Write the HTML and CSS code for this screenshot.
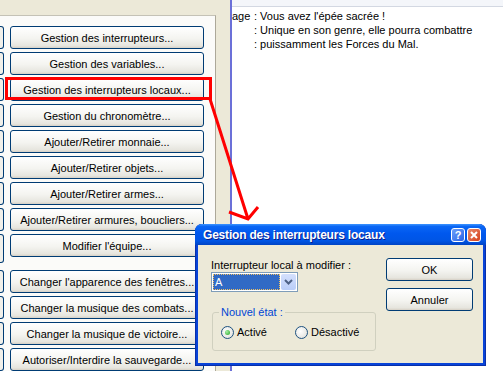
FILE: index.html
```html
<!DOCTYPE html>
<html lang="fr">
<head>
    <meta charset="UTF-8">
    <title>Gestion des interrupteurs locaux</title>
    <link rel="stylesheet" href="styles.css">
</head>
<body>

<div class="screen">
    <!-- Event command list -->
    <div class="editor">
        <div class="panel">
            <div class="row"><span class="stub"></span><button class="xp-btn">Gestion des interrupteurs...</button></div>
            <div class="row"><span class="stub"></span><button class="xp-btn">Gestion des variables...</button></div>
            <div class="row"><span class="stub"></span><button class="xp-btn">Gestion des interrupteurs locaux...</button></div>
            <div class="row"><span class="stub"></span><button class="xp-btn">Gestion du chronomètre...</button></div>
            <div class="row"><span class="stub"></span><button class="xp-btn">Ajouter/Retirer monnaie...</button></div>
            <div class="row"><span class="stub"></span><button class="xp-btn">Ajouter/Retirer objets...</button></div>
            <div class="row"><span class="stub"></span><button class="xp-btn">Ajouter/Retirer armes...</button></div>
            <div class="row"><span class="stub"></span><button class="xp-btn">Ajouter/Retirer armures, boucliers...</button></div>
            <div class="row"><span class="stub tall"></span><button class="xp-btn">Modifier l'équipe...</button></div>
            <div class="row spaced"><span class="stub"></span><button class="xp-btn">Changer l'apparence des fenêtres...</button></div>
            <div class="row"><span class="stub"></span><button class="xp-btn">Changer la musique des combats...</button></div>
            <div class="row"><span class="stub"></span><button class="xp-btn">Changer la musique de victoire...</button></div>
            <div class="row"><span class="stub"></span><button class="xp-btn">Autoriser/Interdire la sauvegarde...</button></div>
        </div>
    </div>

    <div class="divider"></div>

    <!-- Event contents -->
    <div class="log">
        <div class="log-head"></div>
        <div class="log-text">
            <div class="line"><span class="tag">age</span>: Vous avez l'épée sacrée !</div>
            <div class="line"><span class="tag"></span>: Unique en son genre, elle pourra combattre</div>
            <div class="line"><span class="tag"></span>: puissamment les Forces du Mal.</div>
        </div>
    </div>
</div>

<!-- Red annotation -->
<svg class="markup" width="503" height="371" viewBox="0 0 503 371">
    <rect x="6.5" y="78.5" width="204" height="20" fill="none" stroke="#ff0000" stroke-width="3"/>
    <path d="M210 99 L248 219 M229 212 L248 219 L258 207" fill="none" stroke="#ff0000" stroke-width="3"/>
</svg>

<!-- Dialog -->
<div class="dialog">
    <div class="titlebar">
        <span class="title">Gestion des interrupteurs locaux</span>
        <span class="cap-btn help">?</span>
        <span class="cap-btn close">
            <svg width="8" height="8" viewBox="0 0 8 8"><path d="M1 1 L7 7 M7 1 L1 7" stroke="#fff" stroke-width="2"/></svg>
        </span>
    </div>
    <div class="dlg-body">
        <div class="dlg-main">
            <div class="label">Interrupteur local à modifier :</div>
            <div class="combo">
                <span class="combo-value">A</span>
                <span class="combo-arrow">
                    <svg width="9" height="6" viewBox="0 0 9 6"><path d="M1 1 L4.5 4.5 L8 1" fill="none" stroke="#4d6185" stroke-width="2"/></svg>
                </span>
            </div>
            <fieldset class="group">
                <legend>Nouvel état :</legend>
                <div class="radios">
                    <label class="radio first"><span class="dot checked"></span>Activé</label>
                    <label class="radio"><span class="dot"></span>Désactivé</label>
                </div>
            </fieldset>
        </div>
        <div class="dlg-side">
            <button class="xp-btn">OK</button>
            <button class="xp-btn">Annuler</button>
        </div>
    </div>
</div>

</body>
</html>
```

FILE: styles.css
```css
body {
    margin: 0;
    width: 503px;
    height: 371px;
    overflow: hidden;
    position: relative;
    font-family: "Liberation Sans", Arial, sans-serif;
    font-size: 11px;
    color: #000;
}
.screen {
    display: flex;
    height: 371px;
}
.editor {
    width: 230px;
    background-color: #ece9d8;
    padding-top: 15px;
    box-sizing: border-box;
}
.panel {
    width: 216px;
    height: 100%;
    box-sizing: border-box;
    background-color: #fbfbf9;
    border-top: 1px solid #c4c2b6;
    border-right: 1px solid #aca899;
    padding-top: 10px;
}
.row {
    display: flex;
    height: 23px;
    margin-bottom: 3px;
}
.row.spaced {
    margin-top: 13px;
}
.stub {
    width: 3px;
    height: 21px;
    border: 1px solid #003c74;
    border-left: none;
    border-radius: 0 3px 3px 0;
    background-color: #f1f0ea;
}
.stub.tall {
    height: 27px;
}
.xp-btn {
    margin-left: 6px;
    width: 194px;
    height: 23px;
    padding: 0;
    border: 1px solid #003c74;
    border-radius: 3px;
    background: linear-gradient(#ffffff, #f4f4f0 55%, #e6e5de 90%, #d6d0c5);
    font-family: "Liberation Sans", Arial, sans-serif;
    font-size: 11px;
    color: #000;
}
.divider {
    width: 2px;
    background-color: #6b70d8;
}
.log {
    flex: 1;
    background-color: #fff;
}
.log-head {
    height: 6px;
    background-color: #f4f6fa;
    border-bottom: 1px solid #d3d8e2;
}
.log-text {
    padding-top: 2px;
    line-height: 14px;
}
.line {
    display: flex;
    white-space: pre;
}
.tag {
    width: 22px;
}
.markup {
    position: absolute;
    left: 0;
    top: 0;
}

/* XP dialog */
.dialog {
    position: absolute;
    left: 195px;
    top: 224px;
    width: 291px;
    height: 142px;
    box-sizing: border-box;
    display: flex;
    flex-direction: column;
    background-color: #0843d8;
    border-radius: 7px 7px 0 0;
    box-shadow: inset 0 0 0 1px #0a2fa8;
    overflow: hidden;
}
.titlebar {
    height: 21px;
    display: flex;
    align-items: center;
    padding: 0 5px 0 8px;
    background: linear-gradient(#3d95ff, #0a66f4 12%, #0058ee 45%, #0055e5 80%, #0044c4);
    color: #fff;
}
.title {
    flex: 1;
    font-weight: bold;
    font-size: 12px;
    letter-spacing: -0.2px;
    text-shadow: 1px 1px #0a1e8c;
}
.cap-btn {
    width: 12px;
    height: 12px;
    border: 1px solid #fff;
    border-radius: 3px;
    display: flex;
    align-items: center;
    justify-content: center;
    font-weight: bold;
    font-size: 11px;
}
.help {
    background: linear-gradient(135deg, #6c9ffa, #2a62e6);
    margin-right: 2px;
}
.close {
    background: linear-gradient(135deg, #e88a6c, #d6401a);
}
.dlg-body {
    flex: 1;
    margin: 0 3px 3px;
    background-color: #ece9d8;
    display: grid;
    grid-template-columns: 1fr 87px;
    column-gap: 10px;
    padding: 13px 10px 0 13px;
}
.label {
    margin-top: 1px;
    line-height: 13px;
}
.combo {
    width: 87px;
    height: 20px;
    box-sizing: border-box;
    border: 1px solid #7f9db9;
    background-color: #fff;
    padding: 1px;
    display: flex;
    gap: 1px;
}
.combo-value {
    flex: 1;
    background-color: #316ac5;
    color: #fff;
    outline: 1px dotted #f0c060;
    outline-offset: -1px;
    padding-left: 2px;
    line-height: 16px;
}
.combo-arrow {
    width: 15px;
    border-radius: 2px;
    background: linear-gradient(#d4e0fd, #b9cdf8);
    display: flex;
    align-items: center;
    justify-content: center;
}
.group {
    margin: 14px 0 0 1px;
    width: 164px;
    height: 45px;
    box-sizing: border-box;
    padding: 0 6px;
    border: 1px solid #d0d0bf;
    border-radius: 3px;
}
.group legend {
    padding: 0 2px;
    line-height: 13px;
    color: #0046d5;
}
.radios {
    display: flex;
    margin-top: 7px;
    padding-left: 2px;
}
.radio {
    display: flex;
    align-items: center;
    gap: 3px;
    line-height: 13px;
}
.radio.first {
    width: 74px;
}
.dot {
    width: 11px;
    height: 11px;
    border: 1px solid #1c5180;
    border-radius: 50%;
    background: radial-gradient(circle at 40% 40%, #fff, #dcdcd6);
    position: relative;
}
.dot.checked::after {
    content: "";
    position: absolute;
    left: 3px;
    top: 3px;
    width: 5px;
    height: 5px;
    border-radius: 50%;
    background: radial-gradient(circle at 35% 35%, #a6f0a6, #21a121);
}
.dlg-side {
    display: flex;
    flex-direction: column;
    gap: 7px;
}
.dlg-side .xp-btn {
    margin-left: 0;
    width: 87px;
}
```
